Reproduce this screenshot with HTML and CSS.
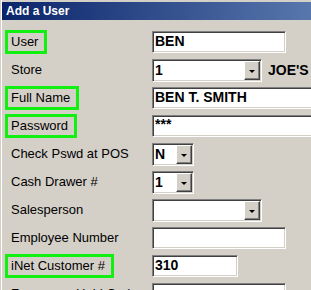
FILE: index.html
```html
<!DOCTYPE html>
<html lang="en">
<head>
  <meta charset="UTF-8">
  <title>Add a User</title>
  <link rel="stylesheet" href="styles.css">
</head>
<body>

<div class="window">
  <div class="titlebar">Add a User</div>

  <div class="form">
    <div class="row">
      <span class="label mark">User</span>
      <div class="field wide">BEN</div>
    </div>
    <div class="row">
      <span class="label">Store</span>
      <div class="combo">
        <div class="field select wide-select">1<span class="drop"></span></div>
        <span class="extra">JOE'S</span>
      </div>
    </div>
    <div class="row">
      <span class="label mark">Full Name</span>
      <div class="field long">BEN T. SMITH</div>
    </div>
    <div class="row">
      <span class="label mark">Password</span>
      <div class="field long stars">***</div>
    </div>
    <div class="row">
      <span class="label">Check Pswd at POS</span>
      <div class="field select small-select">N<span class="drop"></span></div>
    </div>
    <div class="row">
      <span class="label">Cash Drawer #</span>
      <div class="field select small-select">1<span class="drop"></span></div>
    </div>
    <div class="row">
      <span class="label">Salesperson</span>
      <div class="field select wide-select"><span class="drop"></span></div>
    </div>
    <div class="row">
      <span class="label">Employee Number</span>
      <div class="field wide"></div>
    </div>
    <div class="row">
      <span class="label mark">iNet Customer #</span>
      <div class="field short">310</div>
    </div>
    <div class="row">
      <span class="label">Frequency Hold Code</span>
      <div class="field wide"></div>
    </div>
  </div>
</div>

</body>
</html>
```

FILE: styles.css
```css
body {
  margin: 0;
  background: #d4d0c8;
  font-family: "Liberation Sans", Arial, sans-serif;
  font-size: 13px;
  color: #000;
  overflow: hidden;
}
.window {
  height: 290px;
  border-left: 1px solid #d4d0c8;
  box-shadow: inset 1px 0 #fff;
  padding-left: 1px;
  padding-top: 2px;
  overflow: hidden;
}
.titlebar {
  height: 18px;
  line-height: 18px;
  padding-left: 4px;
  color: #fff;
  font-weight: bold;
  font-size: 12px;
  background: linear-gradient(to right, #0a246a, #a6caf0);
  background-size: 620px 100%;
  background-repeat: no-repeat;
}
.form {
  padding-top: 8px;
}
.row {
  display: grid;
  grid-template-columns: 150px auto;
  align-items: center;
  height: 28px;
}
.label {
  justify-self: start;
  margin-left: 9px;
  line-height: 18px;
  white-space: nowrap;
}
.label.mark {
  margin-left: 3px;
  border: 3px solid #12f012;
  padding: 0 6px 0 3px;
}
.field {
  box-sizing: border-box;
  height: 22px;
  line-height: 19px;
  padding-left: 2px;
  background: #fff;
  border: 1px solid;
  border-color: #808080 #fff #fff #808080;
  box-shadow: inset 1px 1px #404040, inset -1px -1px #d4d0c8;
  font-weight: bold;
  font-size: 14px;
  white-space: nowrap;
  overflow: hidden;
}
.wide { width: 134px; }
.long { width: 200px; }
.short { width: 86px; }
.stars { line-height: 16px; }
.combo {
  display: flex;
  align-items: center;
  gap: 6px;
}
.select {
  position: relative;
  height: 23px;
  line-height: 20px;
}
.wide-select { width: 110px; }
.small-select { width: 42px; }
.drop {
  position: absolute;
  top: 1px;
  right: 1px;
  bottom: 1px;
  width: 16px;
  box-sizing: border-box;
  background: #d4d0c8;
  border: 1px solid;
  border-color: #fff #404040 #404040 #fff;
  box-shadow: inset -1px -1px #808080;
}
.drop::after {
  content: "";
  position: absolute;
  left: 4px;
  top: 8px;
  border-left: 3px solid transparent;
  border-right: 3px solid transparent;
  border-top: 3px solid #000;
}
.extra {
  font-weight: bold;
  font-size: 14px;
}
```
